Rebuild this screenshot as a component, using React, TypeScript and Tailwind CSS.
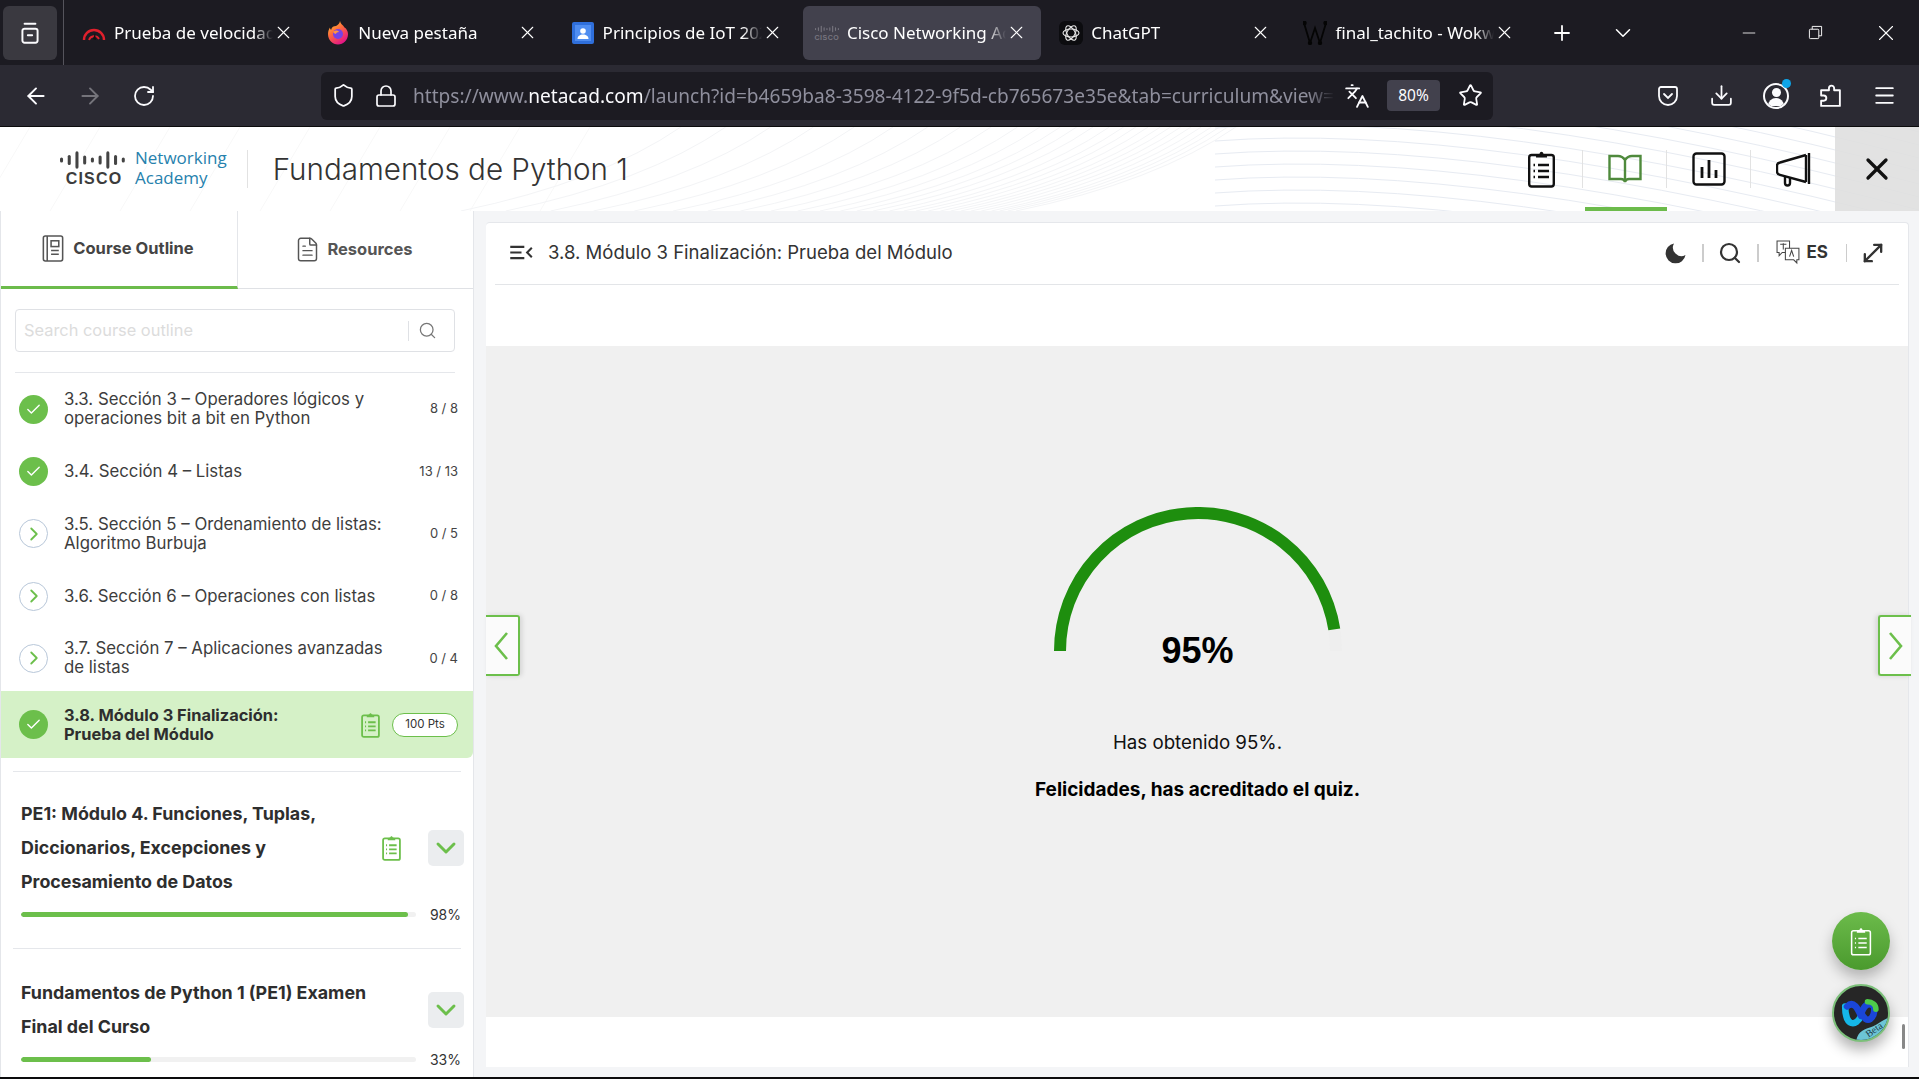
import {
  ArrowLeft, ArrowRight, RotateCw, Shield, Lock, Languages, Star, Download, Menu,
  X, Search, MoveDiagonal, Check, ChevronRight, ChevronDown, FileText, Plus, Minus,
} from "lucide-react";

const CiscoBars = ({ color, className }: { color: string; className?: string }) => (
  <svg viewBox="0 0 64 17" className={className} fill={color}>
    {[5, 10, 17, 9, 5, 9, 17, 10, 5].map((h, i) => (
      <rect key={i} x={i * 7.6} y={8.5 - h / 2} width="3" height={h} rx="1.5" />
    ))}
  </svg>
);

// clipboard with a list, used in several sizes
const ClipList = ({ color, w, h, sw = 2.4 }: { color: string; w: number; h: number; sw?: number }) => (
  <svg viewBox="0 0 27 38" width={w} height={h} fill="none" stroke={color} strokeWidth={sw}>
    <rect x="1.200" y="5" width="24.600" height="31.500" rx="2.500" />
    <path d="M8 6.500c0-2 2-2.500 3.500-2.500.5-3 3.500-3 4 0 1.500 0 3.500.5 3.500 2.500v1H8z" fill={color} stroke="none" />
    <path d="M10 15h11M10 21h11M10 27h11" />
    <path d="M5.500 15h1.500M5.500 21h1.500M5.500 27h1.500" />
  </svg>
);

const Speedtest = () => (
  <svg viewBox="0 0 24 24" className="w-6 h-6" fill="none">
    <path d="M2 19a10 10 0 0 1 20 0" stroke="#e0202c" strokeWidth="2.400" />
    <path d="M7 19a5.500 5.500 0 0 1 10 -1" stroke="#e0202c" strokeWidth="1.800" />
    <path d="M11 18 l2 -6 l1 7z" fill="#111" />
  </svg>
);

const Firefox = () => (
  <svg viewBox="0 0 24 24" className="w-6 h-6">
    <defs>
      <linearGradient id="ff" x1="0" y1="0" x2="0.6" y2="1">
        <stop offset="0" stopColor="#ffd43b" />
        <stop offset="0.45" stopColor="#ff7139" />
        <stop offset="1" stopColor="#e31587" />
      </linearGradient>
    </defs>
    <path d="M14 0c.5 3 3 4 4.500 6.500 2 1 3.500 4 3.500 6.500C22 19 17.500 23.500 12 23.500S2 19 2 13c0-3 1-5 2-6.500 0 1 .5 2 1.200 2.300C5.500 6 8 5 10 5c1.500-1 3.500-2 4-5z" fill="url(#ff)" />
    <circle cx="12" cy="13" r="5" fill="#7542e5" />
    <path d="M7 11c2-2 5-2 6 0-2 0-3 1-3 2-1 0-2-1-3-2z" fill="#ff9640" />
  </svg>
);

const Classroom = () => (
  <svg viewBox="0 0 24 24" className="w-6 h-6">
    <rect x="1" y="1" width="22" height="22" rx="2" fill="#2f6fdb" />
    <rect x="4" y="4" width="16" height="16" fill="#4f8df0" />
    <circle cx="12" cy="10" r="2.800" fill="#fff" />
    <path d="M6.500 18c0-3 2.500-4.500 5.500-4.500s5.500 1.500 5.500 4.500z" fill="#fff" />
  </svg>
);

const ChatGptIcon = () => (
  <svg viewBox="0 0 24 24" className="w-6 h-6" fill="none">
    <rect width="24" height="24" rx="6" fill="#0c0c0f" />
    <g stroke="#e8e8e8" strokeWidth="1.100">
      <ellipse cx="12" cy="12" rx="8" ry="4" />
      <ellipse cx="12" cy="12" rx="8" ry="4" transform="rotate(60 12 12)" />
      <ellipse cx="12" cy="12" rx="8" ry="4" transform="rotate(120 12 12)" />
    </g>
  </svg>
);

const WokwiIcon = () => (
  <svg viewBox="0 0 24 24" className="w-6 h-6" fill="none" stroke="#050505" strokeWidth="1.800">
    <path d="M1 2 L7 22 L12 7 L17 22 L23 2" />
    <circle cx="1.500" cy="2" r="1.300" fill="#050505" />
    <circle cx="22.500" cy="2" r="1.300" fill="#050505" />
    <circle cx="7" cy="22" r="1.300" fill="#050505" />
    <circle cx="17" cy="22" r="1.300" fill="#050505" />
  </svg>
);

const CiscoFavicon = () => (
  <div className="flex flex-col items-center text-[#77757f]">
    <CiscoBars color="#77757f" className="w-[24px] h-[10px]" />
    <div className="text-[7px] leading-[8px] font-bold tracking-[0.5px] [font-family:'Liberation_Sans',sans-serif]">CISCO</div>
  </div>
);

const tabs = [
  { title: "Prueba de velocidad de internet", icon: <Speedtest /> },
  { title: "Nueva pestaña", icon: <Firefox /> },
  { title: "Principios de IoT 2024 - Classroom", icon: <Classroom /> },
  { title: "Cisco Networking Academy", icon: <CiscoFavicon />, active: true },
  { title: "ChatGPT", icon: <ChatGptIcon /> },
  { title: "final_tachito - Wokwi Simulator", icon: <WokwiIcon /> },
];

const TabStrip = () => (
  <div className="h-[65px] shrink-0 bg-[#1c1b22] flex items-center text-white [font-family:'Noto_Sans',sans-serif]">
    <div className="ml-[3px] w-[54px] h-[54px] rounded-[6px] bg-[#3a3940] flex items-center justify-center">
      <svg viewBox="0 0 24 24" className="w-[26px] h-[26px]" fill="none" stroke="#fbfbfe" strokeWidth="1.800">
        <rect x="5" y="8" width="14" height="13" rx="2" />
        <path d="M7 3.500h10M10 14h4" strokeLinecap="round" />
      </svg>
    </div>
    <div className="ml-[6px] w-px h-full bg-[#55545c]" />
    <div className="ml-[6px] flex items-center gap-[6.3px]">
      {tabs.map((t) => (
        <div key={t.title} className={`w-[238px] h-[54px] rounded-[6px] flex items-center pl-[12px] pr-[14px] ${t.active ? "bg-[#42414d]" : ""}`}>
          <div className="w-[24px] flex justify-center shrink-0">{t.icon}</div>
          <div className="ml-[8px] flex-1 overflow-hidden whitespace-nowrap text-[17px] [mask-image:linear-gradient(to_right,black_88%,transparent)]">{t.title}</div>
          <X size={21} strokeWidth={1.3} className="shrink-0" />
        </div>
      ))}
    </div>
    <Plus size={24} strokeWidth={1.8} className="ml-[21px]" />
    <ChevronDown size={26} strokeWidth={1.4} className="ml-[36px]" />
    <div className="ml-auto flex items-center">
      <Minus size={20} strokeWidth={1} />
      <svg viewBox="0 0 16 16" className="w-[15px] h-[15px] ml-[49px]" fill="none" stroke="#fff" strokeWidth="1">
        <rect x="1.500" y="4.500" width="10" height="10" rx="1" />
        <path d="M4.500 4.500V1.500h10v10h-3" />
      </svg>
      <X size={26} strokeWidth={1} className="ml-[50px] mr-[20px]" />
    </div>
  </div>
);

const Toolbar = () => (
  <div className="relative h-[61px] shrink-0 bg-[#2b2a33] flex items-center text-[#fbfbfe]">
    <ArrowLeft size={26} strokeWidth={1.8} className="ml-[23px]" />
    <ArrowRight size={26} strokeWidth={1.8} className="ml-[28px] text-[#75747b]" />
    <RotateCw size={24} strokeWidth={1.8} className="ml-[29px]" />
    <div className="ml-[165px] w-[1172px] h-[48px] rounded-[6px] bg-[#1c1b22] flex items-center pl-[10px]">
      <Shield size={25} strokeWidth={1.7} />
      <Lock size={24} strokeWidth={1.7} className="ml-[18px]" />
      <div className="ml-[15px] w-[922px] pt-[2px] overflow-hidden whitespace-nowrap text-[19.1px] text-[#8f8f9d] [font-family:'Noto_Sans',sans-serif] [mask-image:linear-gradient(to_right,black_97%,transparent)]">
        https://www.<span className="text-[#fbfbfe]">netacad.com</span>/launch?id=b4659ba8-3598-4122-9f5d-cb765673e35e&amp;tab=curriculum&amp;view=5f3a2
      </div>
      <Languages size={26} strokeWidth={1.7} className="ml-[9px]" />
      <div className="ml-[17px] w-[53px] h-[31px] rounded-[4px] bg-[#42414d] flex items-center justify-center text-[15.5px] [font-family:'Noto_Sans',sans-serif]">80%</div>
      <Star size={25} strokeWidth={1.7} className="ml-[18px]" />
    </div>
    <div className="ml-[163px] flex items-center gap-[29px]">
      <svg viewBox="0 0 24 24" className="w-[24px] h-[24px]" fill="none" stroke="#fbfbfe" strokeWidth="1.800">
        <path d="M3 5a2 2 0 0 1 2-2h14a2 2 0 0 1 2 2v7a9 9 0 0 1-18 0z" />
        <path d="M8 10l4 4 4-4" strokeLinecap="round" />
      </svg>
      <Download size={25} strokeWidth={1.7} />
      <div className="relative">
        <div className="w-[26px] h-[26px] rounded-full border-2 border-[#fbfbfe] overflow-hidden flex flex-col items-center">
          <div className="mt-[3px] w-[9px] h-[9px] rounded-full bg-[#fbfbfe]" />
          <div className="mt-[1px] w-[16px] h-[8px] rounded-t-full bg-[#fbfbfe]" />
        </div>
        <div className="absolute -right-[2px] -top-[4px] w-[9px] h-[9px] rounded-full bg-[#0ea5e9]" />
      </div>
      <svg viewBox="0 0 24 24" className="w-[25px] h-[25px]" fill="none" stroke="#fbfbfe" strokeWidth="1.800" strokeLinejoin="round">
        <path d="M3 7h7.500V5a2.500 2.500 0 0 1 5 0v2H21v15H3v-5h2.500a2.500 2.500 0 0 0 0-5H3z" />
      </svg>
      <Menu size={25} strokeWidth={1.7} />
    </div>
  </div>
);

const fanTops = [100, 210, 320, 425, 525, 620, 705, 785, 860, 925, 980, 1030, 1070, 1110, 1150, 1185, 1215, 1245, 1275, 1300, 1325, 1350, 1375, 1400, 1420, 1440, 1460];
const curves = Array.from({ length: 16 }, (_, i) => -120 + i * 13);
const diagonals = [30, 100, 170, 240, 310, 380, 450, 520, 590];

const Header = () => (
  <div className="relative h-[84px] shrink-0 bg-white flex items-center overflow-hidden">
    <svg className="absolute inset-0 w-full h-full pointer-events-none" viewBox="0 0 1919 84" fill="none" strokeWidth="1">
      {diagonals.map((x) => <path key={x} d={`M${x} 0L${x - 50} 84`} stroke="#f8f8f8" />)}
      {fanTops.map((z) => {
        const x = 640 + z / 2.45;
        return <path key={z} d={`M${x} 0Q${x - 80} 55 ${x - 220} 84`} stroke="#f3f4f6" />;
      })}
      {curves.map((y) => <path key={y} d={`M1215 ${y + 30}Q1480 ${y + 10} 1919 ${y + 125}`} stroke="#e7ebf2" />)}
    </svg>
    <div className="relative ml-[60px] flex items-center">
      <div className="w-[65px] flex flex-col items-center">
        <CiscoBars color="#444" className="w-[65px] h-[18px] shrink-0" />
        <div className="mt-[1px] ml-[3px] text-[16px] leading-[18px] font-bold tracking-[1.2px] text-[#3c3c3c] [font-family:'Liberation_Sans',sans-serif]">CISCO</div>
      </div>
      <div className="ml-[10px] -mt-[2px] text-[#2681ad] text-[17px] leading-[20px] [font-family:'Open_Sans',sans-serif]">
        <div>Networking</div>
        <div>Academy</div>
      </div>
    </div>
    <div className="relative ml-[20px] w-px h-[38px] bg-[#e2e2e2]" />
    <div className="relative ml-[25px] text-[29.6px] font-light text-[#333] [font-family:Inter,sans-serif]">Fundamentos de Python 1</div>
    <div className="relative ml-auto flex h-full items-stretch">
      {[
        <ClipList key="a" color="#111" w={27} h={38} />,
        <svg key="b" viewBox="0 0 34 30" className="w-[34px] h-[30px]" fill="none" stroke="#4f8a3c" strokeWidth="2.400">
          <path d="M17 6C15 3 13 2 10 2H1.500v23H13c2 0 3.500 1 4 3 .5-2 2-3 4-3h11.500V2H24c-3 0-5 1-7 4zV28" />
        </svg>,
        <svg key="c" viewBox="0 0 34 34" className="w-[34px] h-[34px]" fill="none" stroke="#111" strokeWidth="2.400">
          <rect x="1.500" y="1.500" width="31" height="31" rx="3" />
          <path d="M10 26V15M17 26V8M24 26V18" strokeWidth="2.800" />
        </svg>,
        <svg key="d" viewBox="0 0 35 35" className="w-[35px] h-[35px]" fill="none" stroke="#111" strokeWidth="2.400">
          <path d="M33 1v31M30 3L4 10.500c-2 .5-3 1.500-3 3v6c0 2 1 3 3 3.400L30 30" />
          <path d="M30 3v27M9 24v7a2.500 2.500 0 0 0 5 0v-5.500" />
        </svg>,
      ].map((icon, i) => (
        <div key={i} className="relative w-[84px] flex items-center justify-center">
          {icon}
          {i < 3 && <div className="absolute right-0 top-[23px] h-[38px] w-px bg-[#e2e2e2]" />}
          {i === 1 && <div className="absolute left-[2px] bottom-0 h-[4px] w-[82px] bg-[#6cbb4b]" />}
        </div>
      ))}
      <div className="w-[84px] bg-[#dfdfdf]/90 flex items-center justify-center">
        <X size={36} strokeWidth={2.2} className="text-[#111]" />
      </div>
    </div>
  </div>
);

const sections = [
  { title: "3.3. Sección 3 – Operadores lógicos y operaciones bit a bit en Python", count: "8 / 8", done: true },
  { title: "3.4. Sección 4 – Listas", count: "13 / 13", done: true },
  { title: "3.5. Sección 5 – Ordenamiento de listas: Algoritmo Burbuja", count: "0 / 5" },
  { title: "3.6. Sección 6 – Operaciones con listas", count: "0 / 8" },
  { title: "3.7. Sección 7 – Aplicaciones avanzadas de listas", count: "0 / 4" },
];

const DoneDot = () => (
  <div className="w-[29px] h-[29px] shrink-0 rounded-full bg-[#6cbf4b] flex items-center justify-center">
    <Check size={17} strokeWidth={2} className="text-white" />
  </div>
);

const Sidebar = () => (
  <div className="w-[474px] shrink-0 h-full bg-white border-l border-r border-[#e4e6ea] overflow-hidden [font-family:Inter,sans-serif]">
    <div className="flex h-[78px] border-b border-[#dfe1e5]">
      <div className="w-[237px] -mb-px border-b-[3px] border-[#6cbb4b] border-r border-r-[#e4e6ea] flex items-center justify-center gap-[9px] pr-[2px] text-[#444]">
        <svg viewBox="0 0 22 28" className="w-[22px] h-[27px]" fill="none" stroke="#555" strokeWidth="1.600">
          <rect x="1" y="1" width="20" height="26" rx="2" />
          <path d="M5 1v26" />
          <rect x="9" y="6" width="8" height="6" />
          <path d="M9 16h8M9 20h8" />
        </svg>
        <span className="text-[16.5px] font-bold">Course Outline</span>
      </div>
      <div className="flex-1 flex items-center justify-center gap-[6px] pr-[4px] text-[#555]">
        <FileText size={27} strokeWidth={1.3} />
        <span className="text-[16.5px] font-bold">Resources</span>
      </div>
    </div>

    <div className="ml-[14px] mr-[18px] mt-[20px] h-[43px] rounded-[4px] border border-[#dfe1e5] flex items-center pl-[8px]">
      <span className="flex-1 text-[16.4px] text-[#dcdcdc]">Search course outline</span>
      <div className="w-px h-[20px] bg-[#dfe1e5]" />
      <Search size={19} strokeWidth={1.6} className="ml-[9px] mr-[17px] text-[#777]" />
    </div>
    <div className="ml-[14px] mr-[18px] mt-[20px] h-px bg-[#e5e7eb]" />

    <div className="mt-[5px]">
      {sections.map((s) => (
        <div key={s.title} className="h-[62.3px] flex items-center pl-[18px] pr-[15px]">
          {s.done ? (
            <DoneDot />
          ) : (
            <div className="w-[29px] h-[29px] shrink-0 rounded-full border border-[#b8c7d9] flex items-center justify-center">
              <ChevronRight size={22} strokeWidth={2} className="text-[#6cbf4b]" />
            </div>
          )}
          <div className="ml-[16px] w-[335px] text-[16.8px] leading-[19px] text-[#3d3d3d]">{s.title}</div>
          <div className="ml-auto text-[13px] text-[#444] whitespace-nowrap">{s.count}</div>
        </div>
      ))}
      <div className="mt-[2px] h-[67px] bg-[#d5f1c7] rounded-br-[6px] flex items-center pl-[18px] pr-[15px]">
        <DoneDot />
        <div className="ml-[16px] text-[16.4px] leading-[19px] font-bold text-[#2e2e2e]">
          <div>3.8. Módulo 3 Finalización:</div>
          <div>Prueba del Módulo</div>
        </div>
        <div className="ml-auto flex"><ClipList color="#6cbf4b" w={19} h={26} sw={2.6} /></div>
        <div className="ml-[12px] w-[66px] h-[24px] rounded-full bg-white border border-[#6cbf4b] flex items-center justify-center text-[11.5px] text-[#333]">100 Pts</div>
      </div>
    </div>
    <div className="mx-[12px] mt-[13px] h-px bg-[#e5e7eb]" />

    <div className="pl-[20px] pr-[9px] pt-[25px]">
      <div className="flex items-center">
        <div className="w-[350px] text-[17.85px] leading-[33.600px] font-bold text-[#2e2e2e]">
          PE1: Módulo 4. Funciones, Tuplas, Diccionarios, Excepciones y Procesamiento de Datos
        </div>
        <div className="ml-[11px] flex"><ClipList color="#6cbf4b" w={19} h={26} sw={2.6} /></div>
        <div className="ml-auto w-[36px] h-[36px] rounded-[5px] bg-[#ebedef] flex items-center justify-center">
          <ChevronDown size={32} strokeWidth={2.2} className="text-[#6cbf4b]" />
        </div>
      </div>
      <div className="mt-[6px] flex items-center">
        <div className="w-[395px] h-[5px] rounded-full bg-[#f1f1f1] overflow-hidden">
          <div className="w-[98%] h-full rounded-full bg-[#6cbf4b]" />
        </div>
        <div className="ml-auto mr-[3px] text-[14px] text-[#333]">98%</div>
      </div>
    </div>
    <div className="mx-[12px] mt-[23px] h-px bg-[#e5e7eb]" />

    <div className="pl-[20px] pr-[9px] pt-[27px]">
      <div className="flex items-center">
        <div className="w-[370px] text-[17.85px] leading-[33.600px] font-bold text-[#2e2e2e]">
          Fundamentos de Python 1 (PE1) Examen Final del Curso
        </div>
        <div className="ml-auto w-[36px] h-[36px] rounded-[5px] bg-[#ebedef] flex items-center justify-center">
          <ChevronDown size={32} strokeWidth={2.2} className="text-[#6cbf4b]" />
        </div>
      </div>
      <div className="mt-[6px] flex items-center">
        <div className="w-[395px] h-[5px] rounded-full bg-[#f1f1f1] overflow-hidden">
          <div className="w-[33%] h-full rounded-full bg-[#6cbf4b]" />
        </div>
        <div className="ml-auto mr-[3px] text-[14px] text-[#333]">33%</div>
      </div>
    </div>
  </div>
);

const Gauge = () => (
  <svg viewBox="0 0 300 150" className="w-[300px] h-[150px]" fill="none" strokeWidth="12">
    <path d="M12 144 A138 138 0 0 1 288 144" stroke="#eeeeee" />
    <path d="M12 144 A138 138 0 0 1 286.300 122.400" stroke="#1e8e0e" />
  </svg>
);

const Webex = () => (
  <div className="relative w-[58px] h-[58px] rounded-full bg-[#262626] border-2 border-[#7cc07a] overflow-hidden shadow-[0_8px_14px_rgba(0,0,0,0.3)]">
    <svg viewBox="0 0 58 58" className="absolute inset-0 w-full h-full" fill="none">
      <path d="M12 22c0 22 12 22 17 10" stroke="#15b7e8" strokeWidth="7" strokeLinecap="round" />
      <path d="M14 22c8-8 13 6 15 10" stroke="#1a46d8" strokeWidth="7" strokeLinecap="round" />
      <path d="M29 30c3-8 7-14 14-8 2 12-8 22-14 6" stroke="#1a46d8" strokeWidth="7" strokeLinecap="round" />
      <path d="M36 17c5 0 9 3 9 8" stroke="#4ecb4a" strokeWidth="6" strokeLinecap="round" />
      <path d="M24 58c2-10 10-12 16-14 6-2 10-6 18-10v24z" fill="#6cc5d6" />
    </svg>
    <span className="absolute right-[5px] bottom-[5px] -rotate-[35deg] text-[10px] leading-none text-[#1d3a48] [font-family:'Liberation_Serif',serif]">Beta</span>
  </div>
);

const NavChevron = ({ d }: { d: string }) => (
  <svg viewBox="0 0 14 28" className="w-[14px] h-[28px]" fill="none" stroke="#6cbf4b" strokeWidth="2.600">
    <path d={d} />
  </svg>
);

const Content = () => (
  <div className="relative ml-[12px] mt-[11px] w-[1423px] h-[845px] bg-white rounded-t-[4px] border-t border-r border-[#e5e7eb] [font-family:Inter,sans-serif] flex flex-col">
    <div className="mx-[9px] h-[62px] shrink-0 pb-[2px] border-b border-[#e3e5e8] flex items-center text-[#333]">
      <svg viewBox="0 0 24 16" className="ml-[15px] w-[23px] h-[15px]" fill="none" stroke="#333" strokeWidth="2.200">
        <path d="M0 2h15M0 8h12M0 14h15M23 3l-5 5 5 5" />
      </svg>
      <div className="ml-[15px] text-[18.55px]">3.8. Módulo 3 Finalización: Prueba del Módulo</div>
      <div className="ml-auto flex items-center">
        <svg viewBox="0 0 22 22" className="w-[22px] h-[22px]" fill="#333">
          <path d="M9 1.500A10 10 0 1 0 20.500 13 8.500 8.500 0 0 1 9 1.500z" />
        </svg>
        <div className="ml-[15px] w-[2px] h-[18px] bg-[#cccccc]" />
        <Search size={24} strokeWidth={2.2} className="ml-[14px]" />
        <div className="ml-[15px] w-[2px] h-[18px] bg-[#cccccc]" />
        <svg viewBox="0 0 24 24" className="ml-[17px] w-[25px] h-[25px]" fill="white" stroke="#444" strokeWidth="1">
          <path d="M1 1h12v11H6l-3 3v-3H1z" />
          <path d="M9 8h13v11h-2v3l-3-3H9z" />
          <path d="M4 4h6M7 3v6M13 16l2-6 2 6" />
        </svg>
        <span className="ml-[6px] text-[17px] font-bold">ES</span>
        <div className="ml-[18px] w-px h-[18px] bg-[#cccccc]" />
        <MoveDiagonal size={28} strokeWidth={2} className="ml-[12px] mr-[12px]" />
      </div>
    </div>
    <div className="h-[61px] shrink-0" />
    <div className="h-[671px] shrink-0 pl-[1px] bg-[#f0f0f0] flex flex-col items-center">
      <div className="mt-[161px]"><Gauge /></div>
      <div className="-mt-[28px] text-[36px] leading-[44px] font-bold text-black [font-family:'Liberation_Sans',sans-serif]">95%</div>
      <div className="mt-[59px] text-[18.7px] leading-[22px] text-[#111]">Has obtenido 95%.</div>
      <div className="mt-[25px] text-[19px] leading-[22px] font-bold text-black">Felicidades, has acreditado el quiz.</div>
    </div>

    {/* side arrows */}
    <div className="absolute left-0 top-[392px] w-[34px] h-[61px] bg-[#fbfbfb] border-2 border-l-0 border-[#6cbf4b] rounded-r-[3px] flex items-center justify-center pr-[3px] shadow-[2px_0_5px_rgba(0,0,0,0.12)]">
      <NavChevron d="M13 1L2 14l11 13" />
    </div>
    <div className="absolute left-[1392px] top-[392px] w-[33px] h-[61px] bg-[#fbfbfb] border-2 border-r-0 border-[#6cbf4b] rounded-l-[3px] flex items-center justify-center pl-[1px] shadow-[-2px_0_5px_rgba(0,0,0,0.12)]">
      <NavChevron d="M1 1l11 13L1 27" />
    </div>

    {/* floating buttons */}
    <div className="absolute left-[1346px] top-[689px] flex flex-col gap-[14px]">
      <div className="w-[58px] h-[58px] rounded-full bg-gradient-to-b from-[#6cbb4b] to-[#4a9a2d] flex items-center justify-center shadow-[0_8px_14px_rgba(0,0,0,0.25)]">
        <ClipList color="#fff" w={22} h={29} sw={2} />
      </div>
      <Webex />
    </div>
    <div className="absolute left-[1416px] top-[801px] w-[3px] h-[25px] rounded-full bg-[#888888]" />
  </div>
);

export default function App() {
  return (
    <div className="relative w-[1919px] h-[1079px] overflow-hidden flex flex-col bg-[#f4f5f7]">
      <TabStrip />
      <Toolbar />
      <div className="h-px shrink-0 bg-[#0c0c0d]" />
      <Header />
      <div className="flex-1 min-h-0 flex items-start">
        <Sidebar />
        <Content />
      </div>
      <div className="h-[2px] shrink-0 bg-[#0c0c0d]" />
    </div>
  );
}
